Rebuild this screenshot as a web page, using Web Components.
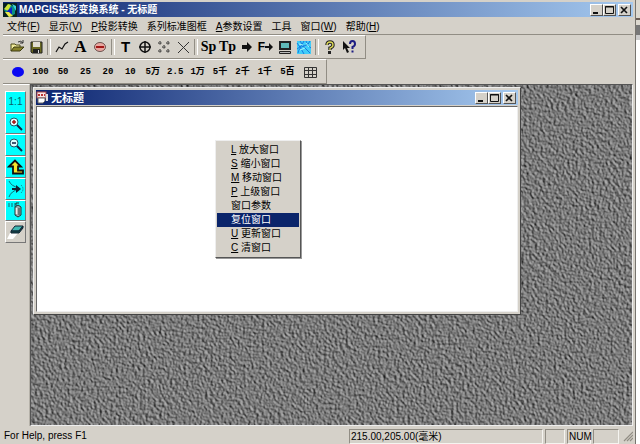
<!DOCTYPE html>
<html lang="zh-CN">
<head>
<meta charset="utf-8">
<title>MAPGIS投影变换系统 - 无标题</title>
<style>
html,body{margin:0;height:100%}
body{background:#fff;overflow:hidden;font:10px/14px "Liberation Sans","Noto Sans CJK SC",sans-serif;color:#000;--face:#d5d1c9}
</style>
</head>
<body>
<mg-desktop></mg-desktop>
<script>
const define=(name,css,html)=>customElements.define(name,class extends HTMLElement{
  connectedCallback(){
    if(this.shadowRoot)return;
    const root=this.attachShadow({mode:'open'});
    const t=document.createElement('template');
    t.innerHTML=`<style>*{box-sizing:border-box}button{font:inherit;color:inherit}:host{box-sizing:border-box}${css}</style>`+(typeof html==='function'?html(this):html);
    root.append(t.content.cloneNode(true));
  }
});

const svg=(body,w=18,h=18)=>`<svg width="${w}" height="${h}" viewBox="0 0 ${w} ${h}" aria-hidden="true">${body}</svg>`;
const icons={
app:svg('<rect width="14" height="14" fill="#082020"/><path d="M1 7 6 1l6 3v7l-6 3z" fill="#0a8f83"/><path d="M1 6 5 1l3 1-3 6z" fill="#cfe437"/><path d="M4 8 9 4v7l-3 1z" fill="#111fc6"/><path d="M2 9l4 5 4-1-4-4z" fill="#ece94a"/><path d="M9 1l4 2v5z" fill="#38d4e0"/>',14,14),
doc:svg('<rect x="1" y="1" width="9" height="6" fill="#f8e6e6" stroke="#a44" /><path d="M2 3h2v2H2zM5 3h2v2H5zM8 3h1v2H8z" fill="#b33"/><path d="M2 7h7v3l-2 2H2z" fill="#fff" stroke="#666"/><path d="M10 3h2v7h-2z" fill="#ddd"/>',13,13),
open:svg('<path d="M3 13V6h4l1 1h4v2" fill="#f1eb9a" stroke="#4d4b16"/><path d="M3 13 6 9h10l-4 4z" fill="#88822a" stroke="#3d3b12"/><path d="M10 4q3-2 5 1M15 2v3h-3" fill="none" stroke="#333"/>'),
save:svg('<path d="M4 4h11v11H5l-1-1z" fill="#6b6a22" stroke="#222"/><path d="M6 4h7v5H6z" fill="#e0ddd2"/><path d="M6 11h7v4H6z" fill="#222"/><path d="M11 12h1v3h-1z" fill="#ddd"/>'),
line:svg('<path d="M3 14 6 9 9 11 12 6 15 4" fill="none" stroke="#111" stroke-width="1.2"/>'),
region:svg('<ellipse cx="9" cy="9" rx="5.5" ry="4.5" fill="#e9a7a0" stroke="#6b5350"/><path d="M5 9h8" stroke="#a31818" stroke-width="2"/>'),
cross:svg('<circle cx="9" cy="9" r="5" fill="none" stroke="#111" stroke-width="1.5"/><path d="M9 3v12M3 9h12" stroke="#111" stroke-width="1.5"/>'),
dots:svg('<path d="M5 3v4M3 5h4M13 3v4M11 5h4M9 7v4M7 9h4M5 11v4M3 13h4M13 11v4M11 13h4" stroke="#222" stroke-dasharray="1.5 .6"/>'),
ex:svg('<path d="M4 4l11 11M15 4 4 15" stroke="#333"/>'),
arrow:svg('<path d="M4 7h5V4l5 5-5 5v-3H4z" fill="#111"/>'),
farrow:svg('<path d="M0 5h4V2l4 4-4 4V7H0z" fill="#111"/>',8,12),
screen:svg('<rect x="3" y="3" width="12" height="9" fill="#222"/><rect x="5" y="5" width="8" height="5" fill="#60b9b8"/><path d="M3.500 13.500h11v2h-11z" fill="#bbb" stroke="#222"/>'),
map:svg('<rect x="2" y="3" width="14" height="13" fill="#40cdf8"/><path d="M2 5q4 5 7 11M5 3q3 6 10 12M11 3q1 5 5 7M3 15q1-6 6-7t6-5M2 11q5-2 7-8" fill="none" stroke="#1779e0"/><path d="M4 6l4 1M11 5l3 4M5 12l5-2" stroke="#a8f5fa"/>'),
help:svg('<path d="M6 7q0-3 3-3t3 3q0 2-3 3v2" fill="none" stroke="#222" stroke-width="3.4"/><path d="M6 7q0-3 3-3t3 3q0 2-3 3v2" fill="none" stroke="#dfda58" stroke-width="1.3"/><rect x="7" y="13" width="3" height="3" fill="#222"/>'),
whats:svg('<path d="M3 3v9l2-2 2 5 2-1-2-4h3z" fill="#111"/><path d="M10 6q0-3 2.5-3T15 6q0 2-2.5 3v2" fill="none" stroke="#1c1c82" stroke-width="2"/><path d="M11.500 12.500h2v2h-2z" fill="#1c1c82"/>'),
oval:svg('<ellipse cx="9" cy="9" rx="6" ry="5" fill="#0a08f2"/>'),
grid:svg('<path d="M3.500 4.500h12v10h-12zM7.500 4v11M11.500 4v11M3 7.500h13M3 11.500h13" fill="none" stroke="#333"/>'),
zin:svg('<circle cx="7" cy="7" r="4" fill="#dff" stroke="#256"/><path d="M5 7h4M7 5v4" stroke="#a11" stroke-width="1.5"/><path d="M10 10 15 15" stroke="#124" stroke-width="2"/>'),
zout:svg('<circle cx="7" cy="7" r="4" fill="#dff" stroke="#256"/><path d="M5 7h4" stroke="#124" stroke-width="1.5"/><path d="M10 10 15 15" stroke="#124" stroke-width="2"/>'),
up:svg('<path d="M2 8.500 8 2.500 14 8.500H11v4h5v3H6v-7z" fill="#f5e62c" stroke="#111" stroke-width="1.800"/>'),
move:svg('<path d="M2 1q2 5 10 7M2 17q2-6 10-8" fill="none" stroke="#146b72"/><path d="M5 8h4V5l5 4-5 4v-3H5z" fill="#123"/><path d="M14 5q4 4 0 8" fill="none" stroke="#146b72" stroke-dasharray="1 1"/>'),
refresh:svg('<path d="M1 3h8M1 5h7" stroke="#17656b" stroke-dasharray="2 1"/><path d="M8 6l3-2 3 2v8l-3 2-3-2z" fill="#9aa" stroke="#233"/><path d="M9.500 7v6" stroke="#eee" stroke-width="1.500"/><path d="M12 7v7" stroke="#344"/><path d="M9 5V2h3" fill="none" stroke="#233"/>'),
erase:svg('<path d="M3 10h8l-5 6H0z" fill="#fff"/><path d="M4 8 8 3h8l-4 5z" fill="#3fb9b3" stroke="#123"/><path d="M4 8v2h8l4-5V3l-4 5z" fill="#164a4c" stroke="#123"/>'),
min:svg('<path d="M2 7h5v2H2z" fill="#111"/>',11,10),
max:svg('<path d="M1.500 1.500h8v7h-8zM1 2h9" fill="none" stroke="#111"/>',11,10),
close:svg('<path d="M2 2l6 6M8 2 2 8" stroke="#111" stroke-width="1.600"/>',11,10)
};

define('mg-caption-buttons',`:host{display:flex;align-items:center;flex:none}
button{width:13px;height:12px;padding:0;display:grid;place-items:center;border:1px solid;border-color:#fff #555 #555 #fff;background:var(--face)}
button:last-child{margin-left:2px}`,
['min','max','close'].map((k,i)=>`<button aria-label="${['最小化','最大化','关闭'][i]}">${icons[k]}</button>`).join(''));

define('mg-title',`:host{display:flex;align-items:center;gap:2px;height:15px;padding-right:2px;background:linear-gradient(90deg,#0c2470,#a5c9ef);color:#fff;font-weight:700;white-space:nowrap}
svg{flex:none;display:block}span{flex:1}:host([icon=doc]) span{font-size:11px}`,
el=>`${icons[el.getAttribute('icon')]}<span><slot></slot></span><mg-caption-buttons></mg-caption-buttons>`);

define('mg-menubar',`:host{display:flex;gap:9px;height:18px;padding:2px 4px 0;align-items:center;white-space:nowrap;border-bottom:1px solid #918d84}
button{border:0;padding:0;background:none}`,
['文件(<u>F</u>)','显示(<u>V</u>)','<u>P</u>投影转换','系列标准图框','<u>A</u>参数设置','工具','窗口(<u>W</u>)','帮助(<u>H</u>)'].map(x=>`<button>${x}</button>`).join(''));

define('mg-toolbar',`:host{display:flex;align-items:center;width:max-content;height:24px;padding:0 7px 0 4px;border:1px solid;border-color:#fff #918d84 #918d84 #fff;border-left:0}
button{width:19px;height:20px;padding:0;border:0;background:none;display:flex;align-items:center;justify-content:center;font:700 14px/18px "Liberation Serif",serif}
button.letter{font-size:17px}
button.sans{font-family:"Liberation Sans",sans-serif;font-size:15px}
button.f{font-size:12px;font-family:"Liberation Sans",sans-serif}
i{width:7px;height:16px;display:block}i::after{content:"";display:block;width:2px;height:100%;margin-left:2px;border-left:1px solid #918d84;border-right:1px solid #fff}`,
[['open','打开'],['save','保存'],0,['line','线'],'<button class="letter">A</button>',['region','区'],0,'<button class="sans">T</button>',['cross','十字'],['dots','点'],['ex','叉'],0,'<button>Sp</button>','<button>Tp</button>',['arrow','转换'],`<button class="f">F${icons.farrow}</button>`,['screen','屏幕'],['map','图'],0,['help','帮助'],['whats','这是什么']].map(k=>!k?'<i></i>':typeof k==='string'?k:`<button aria-label="${k[1]}">${icons[k[0]]}</button>`).join(''));

define('mg-scalebar',`:host{display:grid;grid-template-columns:repeat(14,1fr);align-items:center;width:324px;height:25px;padding:0 5px 0 4px;border:1px solid;border-color:#fff #918d84 #918d84 #fff;border-left:0}
button{height:20px;padding:0;border:0;background:none;display:flex;align-items:center;justify-content:center;white-space:nowrap;font:700 9px/14px "Liberation Mono","Noto Sans CJK SC",monospace}`,
['oval','100','50','25','20','10','5万','2.5','1万','5千','2千','1千','5百','grid'].map(k=>icons[k]?`<button aria-label="${k==='grid'?'网格':'椭球'}">${icons[k]}</button>`:`<button>${k}</button>`).join(''));

define('mg-sidebar',`:host{display:block;width:27px;padding:6px 3px 0 2px;border-top:1px solid #fff;border-right:1px solid #b5b1a8}
div{display:grid;grid-auto-rows:1fr;height:152px}
button{padding:0;display:grid;place-items:center;overflow:hidden;border:1px solid;border-color:#fff #777 #777 #fff;background:#0ff;color:#0b5f68;white-space:nowrap}
button:last-child{background:var(--face)}svg{display:block}`,
`<div><button>1:1</button>${[['zin','放大'],['zout','缩小'],['up','上级'],['move','移动'],['refresh','更新'],['erase','清除']].map(([k,l])=>`<button aria-label="${l}">${icons[k]}</button>`).join('')}</div>`);

define('mg-child',`:host{display:flex;flex-direction:column;background:var(--face);border:1px solid;border-color:#eee #444 #444 #eee;padding:2px}
div{flex:1;background:#fff;border:1px solid;border-color:#666 #eee #eee #666;margin-top:1px}`,
`<mg-title icon="doc"><slot></slot></mg-title><div></div>`);

define('mg-popup',`:host{display:block;width:86px;padding:2px 1px;background:var(--face);border:1px solid;border-color:#eee #555 #555 #eee;box-shadow:1px 1px 0 #999}
button{display:block;width:100%;height:14px;padding:0 0 0 14px;border:0;background:none;text-align:left;line-height:14px;white-space:nowrap}
button.on{background:#0a246a;color:#fff}`,
['<u>L</u> 放大窗口','<u>S</u> 缩小窗口','<u>M</u> 移动窗口','<u>P</u> 上级窗口','窗口参数','复位窗口','<u>U</u> 更新窗口','<u>C</u> 清窗口'].map((x,i)=>`<button${i===5?' class="on"':''}>${x}</button>`).join(''));

define('mg-workspace',`:host{display:block;position:relative;flex:1;overflow:hidden;background:#757575;border:1px solid;border-color:#555 #eee #eee #555}
.rock{position:absolute;inset:0;width:100%;height:100%}
mg-child{position:absolute;left:2px;top:2px;width:488px;height:228px}
mg-popup{position:absolute;left:184px;top:55px}`,
`<svg class="rock" aria-hidden="true"><filter id="rock" x="0" y="0" width="100%" height="100%" color-interpolation-filters="sRGB"><feTurbulence type="fractalNoise" baseFrequency=".37" numOctaves="3" seed="6"/><feColorMatrix values="0 0 0 0 0 0 0 0 0 0 0 0 0 0 0 1 0 0 0 0"/><feDiffuseLighting surfaceScale="1.3" diffuseConstant=".72" lighting-color="#fff"><feDistantLight azimuth="330" elevation="42"/></feDiffuseLighting></filter><rect width="100%" height="100%" filter="url(#rock)"/></svg>
<mg-child>无标题</mg-child><mg-popup></mg-popup>`);

define('mg-status',`:host{display:flex;gap:2px;align-items:center;height:18px;padding-top:2px;white-space:nowrap}
span{height:15px;line-height:13px;padding:0 1px;border:1px solid;border-color:#918d84 #f5f4f0 #f5f4f0 #918d84}
.help{flex:1;border:0}.pos{width:194px}.a{width:20px}.b{width:24px}.c{width:26px}svg{margin-left:2px}`,
`<span class="help">For Help, press F1</span><span class="pos">215.00,205.00(毫米)</span><span class="a"></span><span class="b">NUM</span><span class="c"></span>${svg('<path d="M1 11 10 2M4 11l6-6M7 11l3-3" stroke="#918d84" stroke-width="1.200"/>',10,12)}`);

define('mg-desktop',`:host{display:flex;height:100vh}
.app{flex:1;min-width:0;display:flex;flex-direction:column;background:var(--face);padding:2px 2px 0 3px;border-right:1px solid #77746e}
.body{flex:1;display:flex;min-height:0}
.edge{width:4px;background:linear-gradient(#ddd9d0 0 18px,#6b5d55 18px 20px,#ddd9d0 20px 25px,#777 25px 35px,#ccc 35px 40px,#fff 40px)}`,
`<div class="app"><mg-title icon="app">MAPGIS投影变换系统 - 无标题</mg-title><mg-menubar></mg-menubar><mg-toolbar></mg-toolbar><mg-scalebar></mg-scalebar><div class="body"><mg-sidebar></mg-sidebar><mg-workspace></mg-workspace></div><mg-status></mg-status></div><div class="edge"></div>`);
</script>
</body>
</html>
